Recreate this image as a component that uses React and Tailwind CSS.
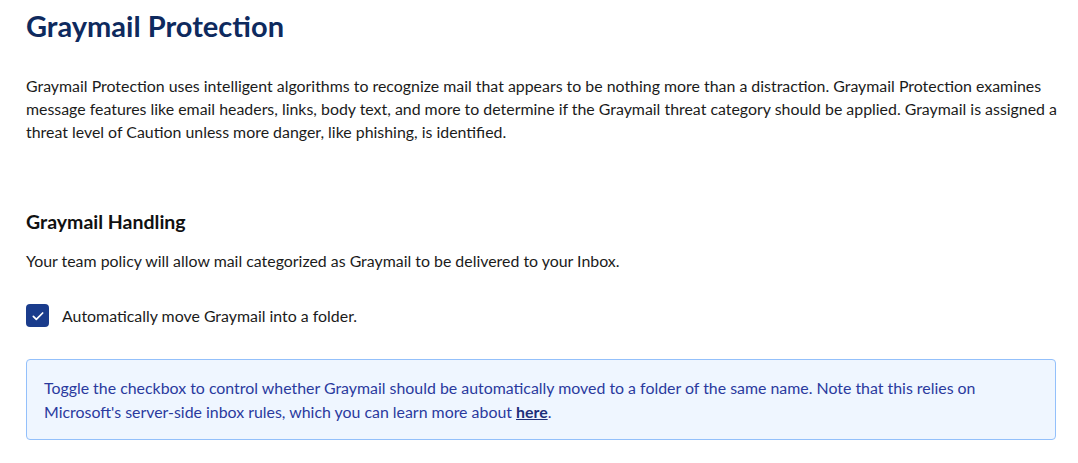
import React, { useState } from "react";

const GraymailSettings = () => {
  const [moveToFolder, setMoveToFolder] = useState(true);

  return (
    <div className="min-h-screen bg-white pl-[26px] pr-[16px] pt-[8px] text-[#1b1b1b] font-['Lato',sans-serif]">
      <h1 className="text-[29px] font-bold leading-[36px] text-[#0e2a5e]">
        Graymail Protection
      </h1>

      <p className="mt-[30px] text-[15.9px] leading-[23px]">
        Graymail Protection uses intelligent algorithms to recognize mail that appears to be
        nothing more than a distraction. Graymail Protection examines message features like
        email headers, links, body text, and more to determine if the Graymail threat category
        should be applied. Graymail is assigned a threat level of Caution unless more danger,
        like phishing, is identified.
      </p>

      {/* Graymail Handling */}
      <h2 className="mt-[67px] text-[19.5px] font-bold leading-[24px] text-[#111]">
        Graymail Handling
      </h2>
      <p className="mt-[15px] text-[15.9px] leading-[23px]">
        Your team policy will allow mail categorized as Graymail to be delivered to your Inbox.
      </p>

      <label className="mt-[32px] flex items-center gap-[13px] cursor-pointer">
        <button
          type="button"
          onClick={() => setMoveToFolder(!moveToFolder)}
          className={`w-[23px] h-[23px] rounded-[4px] flex items-center justify-center ${
            moveToFolder ? "bg-[#1a3c8c]" : "bg-white border border-gray-400"
          }`}
        >
          {moveToFolder && (
            <svg width="16" height="16" viewBox="0 0 24 24" fill="none">
              <path
                d="M5 12.5l4.5 4.5L19 7.5"
                stroke="white"
                strokeWidth="2.6"
                strokeLinecap="round"
                strokeLinejoin="round"
              />
            </svg>
          )}
        </button>
        <span className="text-[15.9px] leading-[23px]">Automatically move Graymail into a folder.</span>
      </label>

      <div className="mt-[32px] mr-[6px] rounded-[4px] border border-[#93c0fb] bg-[#eff6ff] px-[17px] py-[15.5px] text-[15.9px] leading-[24px] text-[#2a3a9e]">
        Toggle the checkbox to control whether Graymail should be automatically moved to a folder
        of the same name. Note that this relies on Microsoft's server-side inbox rules, which you
        can learn more about{" "}
        <a href="#" className="font-bold underline text-[#1e2f7a]">
          here
        </a>
        .
      </div>
    </div>
  );
};

export default GraymailSettings;
